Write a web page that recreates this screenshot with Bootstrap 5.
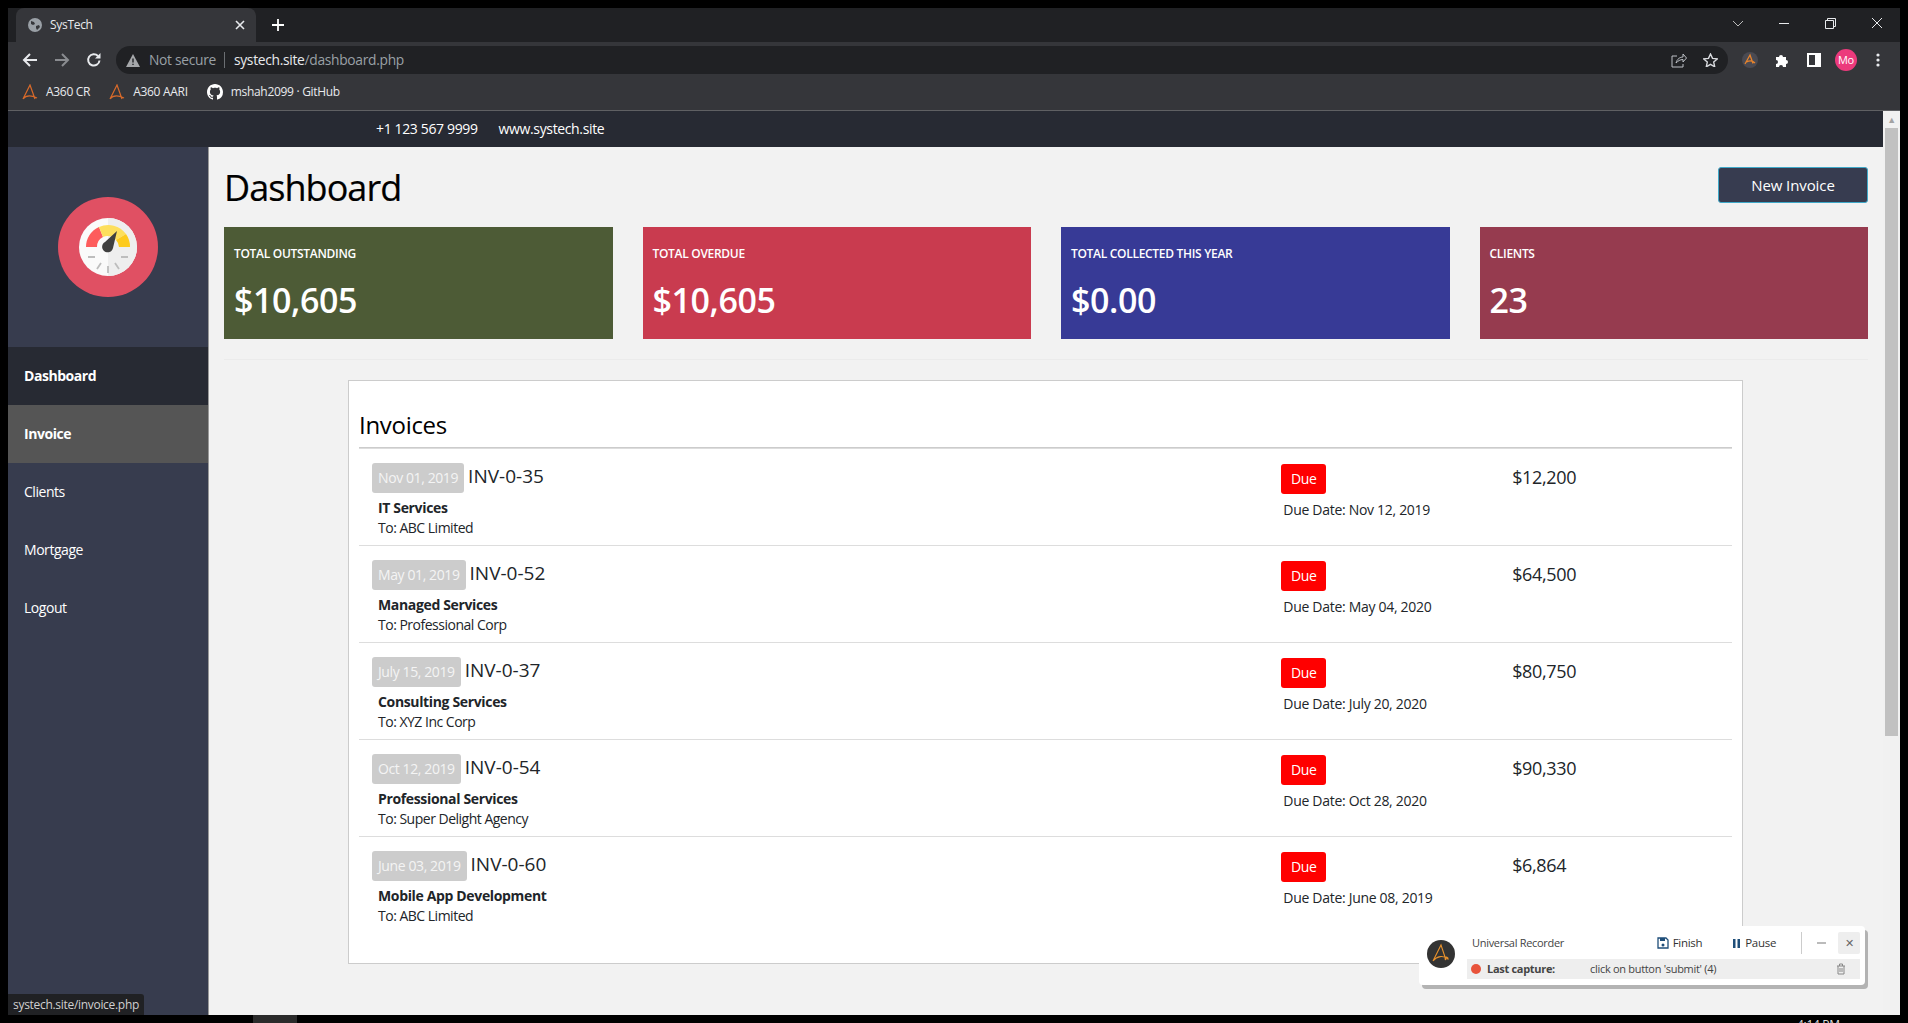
<!DOCTYPE html>
<html lang="en">
<head>
    <meta charset="UTF-8">
    <meta name="viewport" content="width=device-width, initial-scale=1.0">
    <title>SysTech</title>
    <link href="https://cdn.jsdelivr.net/npm/bootstrap@5.3.0/dist/css/bootstrap.min.css" rel="stylesheet">
    <style>
        html, body { height: 100%; }
        body {
            background: #000;
            font-family: "Open Sans", "Noto Sans", sans-serif;
            color: #000;
            overflow: hidden;
            padding: 8px 8px 8px 8px;
            letter-spacing: -0.3px;
        }
        .win { height: 1007px; width: 1892px; position: relative; }

        /* browser frame */
        .tabstrip { height: 34px; background: #202124; padding-left: 8px; color: #e8eaed; }
        .tab-item { width: 240px; height: 34px; background: #35363a; border-radius: 8px 8px 0 0; padding: 0 11px 0 12px; font-size: 12px; }
        .tab-title { margin-left: 8px; }
        .plus-btn { margin-left: 16px; }
        .win-ctrls { gap: 35px; padding: 0 17px 4px 0; }
        .toolbar { height: 40px; background: #35363a; padding: 4px 6px 8px 14px; }
        .nav-icons { gap: 16px; width: 94px; }
        .omnibox { height: 28px; background: #202124; border-radius: 14px; padding: 0 10px 0 10px; font-size: 13.8px; color: #9aa0a6; width: 1612px; flex-shrink: 0; }
        .omni-sep { width: 1px; height: 16px; background: #6b6e72; margin: 0 9px 0 8px; }
        .omni-host { color: #e8eaed; }
        .omni-warn { margin-right: 9px; }
        .ext-icons { margin-left: 6px; }
        .ext-cell { width: 32px; }
        .avatar-mo { width: 22px; height: 22px; border-radius: 50%; background: #ec3a7c; color: #fff; font-size: 11px; line-height: 22px; text-align: center; }
        .bookmarks { height: 29px; background: #35363a; border-bottom: 1px solid #5f6063; padding: 0 0 8px 14px; font-size: 12px; color: #e8eaed; gap: 19px; }
        .bookmarks span { margin-left: 8px; }

        /* page */
        .page-area { height: 904px; }
        .page-left { width: 1875px; }
        .topbar { height: 36px; background: #272a33; color: #fff; font-size: 14px; padding: 0 0 2px 368px; gap: 21px; letter-spacing: -0.36px; }
        .page-body { height: 868px; }
        .side { width: 201px; background: #373c4e; border-right: 1px solid #999; flex-shrink: 0; }
        .side-logo { height: 200px; }
        .side .nav-link { height: 58px; line-height: 58px; padding: 0 0 0 16px; color: #fff; font-size: 14px; letter-spacing: -0.45px; }
        .side .nav-link.on-dash { background: #272a33; font-weight: 700; }
        .side .nav-link.on-inv { background: #555; font-weight: 700; }
        .main-pane { background: #f2f2f2; padding: 0 15px 0 15px; overflow: hidden; }
        .head-row { height: 80px; padding-top: 20px; }
        .page-title { font-size: 36px; font-weight: 400; margin: 0; line-height: 1; padding-top: 3px; letter-spacing: -0.95px; -webkit-text-stroke: 0.2px #000; }
        .btn-new { width: 150px; height: 36px; background: #373c50; color: #fff; border: 1px solid #3fa9c9; border-radius: 3px; font-size: 15px; padding: 0; letter-spacing: -0.1px; }
        .btn-new:hover { background: #373c50; color: #fff; }
        .stat-row { gap: 30px; }
        .stat-box { flex: 1 1 0; height: 112px; border: 0; border-radius: 0; color: #fff; padding: 19px 10px 0; }
        .stat-label { font-size: 12px; font-weight: 600; line-height: 16px; }
        .stat-val { font-size: 34px; font-weight: 600; line-height: 50px; margin-top: 13px; letter-spacing: -0.4px; }
        .bg-olive { background: #4d5b36; }
        .bg-rose { background: #c93b4f; }
        .bg-indigo { background: #373a96; }
        .bg-wine { background: #963b4f; }
        .soft-rule { margin: 20px 0; border: 0; border-top: 1px solid #ebebeb; opacity: 1; }
        .inv-panel { margin: 0 125px 0 124px; height: 584px; background: #fff; border: 1px solid #ccc; border-radius: 0; padding: 0 10px; }
        .inv-title { font-size: 24px; font-weight: 400; line-height: 32px; margin: 0; padding: 28px 0 6px 0; height: 66px; }
        .list-group .inv-row { height: 97px; border: 0; border-top: 1px solid #ddd; padding: 0; background: transparent; }
        .inv-row .row { --bs-gutter-x: 0; }
        .cell-main { padding: 13px 0 0 13px; }
        .date-chip { background: #ccc; color: #f4f4f4; font-size: 14px; font-weight: 400; padding: 0 6px; height: 30px; line-height: 30px; border-radius: 3px; border: 0; letter-spacing: -0.4px; }
        .inv-no { font-size: 19px; margin-left: 4px; letter-spacing: 0; }
        .inv-svc { font-size: 14px; font-weight: 700; margin: 5px 0 0 6px; line-height: 20px; letter-spacing: -0.35px; }
        .inv-to { font-size: 14px; margin: 0 0 0 6px; line-height: 20px; letter-spacing: -0.5px; }
        .cell-due { padding: 15px 0 0 7px; }
        .due-chip { width: 45px; height: 30px; line-height: 30px; text-align: center; background: #f00; color: #fff; font-size: 14px; border-radius: 3px; }
        .due-date { font-size: 14px; margin: 6px 0 0 2px; line-height: 20px; }
        .cell-amt { padding: 15px 0 0 9px; font-size: 18px; font-weight: 500; line-height: 26px; letter-spacing: -0.35px; }

        /* scrollbar */
        .sbar { width: 17px; background: #f1f1f1; padding: 0 2px; color: #a3a3a3; }
        .sbar-arrow { height: 17px; font-size: 9px; line-height: 17px; text-align: center; }
        .sbar-thumb { height: 608px; background: #c1c1c1; }

        /* overlays */
        .link-hint { position: absolute; left: 0; bottom: 0; height: 21px; padding: 0 5px; background: #202124; color: #d0d0d0; font-size: 12px; line-height: 21px; border-radius: 0 3px 0 0; }
        .rec-pop { position: absolute; left: 1411px; top: 918px; width: 446px; height: 59px; background: #fff; border-radius: 4px; box-shadow: 3px 4px 0 #b3b3b3; font-size: 11px; color: #444; padding: 5px 5px 5px 8px; }
        .rec-logo { width: 28px; height: 28px; border-radius: 50%; background: #333; flex-shrink: 0; margin-top: 9px; }
        .rec-body { margin-left: 12px; min-width: 0; }
        .rec-top { height: 28px; padding: 0 0 4px 5px; }
        .rec-name { width: 185px; }
        .rec-act { color: #333; font-size: 11.5px; }
        .rec-act svg { margin-right: 4px; }
        .rec-gap { margin-left: 30px; }
        .rec-sep { width: 1px; height: 22px; background: #ccc; margin: 0 15px 0 25px; }
        .rec-x { width: 22px; height: 22px; background: #eee; border-radius: 2px; line-height: 22px; text-align: center; margin-left: 12px; color: #666; }
        .rec-low { height: 20px; background: #eee; padding: 0 14px 0 4px; }
        .rec-dot { width: 10px; height: 10px; background: #e8533a; border-radius: 50%; margin-right: 6px; }
        .rec-cap { width: 103px; font-weight: 700; }
        .under-strip { position: absolute; left: 245px; top: 1007px; width: 44px; height: 8px; background: #2b2b2b; }
        .under-clock { position: absolute; left: 1789px; top: 1010px; height: 5px; overflow: hidden; color: #ddd; font-size: 12px; line-height: 14px; }
    </style>
</head>
<body>
<div class="win">
    <!-- browser chrome -->
    <div class="tabstrip d-flex align-items-center">
        <div class="tab-item d-flex align-items-center">
            <svg width="14" height="14" viewBox="0 0 14 14"><circle cx="7" cy="7" r="7" fill="#9aa0a6"/><path d="M3 3l3 1 1 2-2 1-2-1zM8 8l3-1 1 2-3 3-1-2z" fill="#35363a"/></svg>
            <span class="tab-title">SysTech</span>
            <svg class="ms-auto" width="10" height="10" viewBox="0 0 10 10"><path d="M1 1l8 8M9 1l-8 8" stroke="#e8eaed" stroke-width="1.6"/></svg>
        </div>
        <svg class="plus-btn" width="12" height="12" viewBox="0 0 12 12"><path d="M6 0v12M0 6h12" stroke="#fff" stroke-width="1.8"/></svg>
        <div class="win-ctrls d-flex align-items-center ms-auto">
            <svg width="12" height="7" viewBox="0 0 12 7"><path d="M1 1l5 5 5-5" fill="none" stroke="#bbb"/></svg>
            <svg width="11" height="11" viewBox="0 0 11 11"><path d="M0 5.500h10" stroke="#e8eaed"/></svg>
            <svg width="11" height="11" viewBox="0 0 11 11"><path d="M2.500 2.500V.5h8v8h-2M.5 2.500h8v8h-8z" fill="none" stroke="#e8eaed"/></svg>
            <svg width="12" height="12" viewBox="0 0 12 12"><path d="M1 1l10 10M11 1L1 11" stroke="#e8eaed"/></svg>
        </div>
    </div>
    <div class="toolbar d-flex align-items-center">
        <div class="nav-icons d-flex align-items-center">
            <svg width="16" height="16" viewBox="0 0 16 16"><path d="M15 8H2M8 2L2 8l6 6" fill="none" stroke="#e8eaed" stroke-width="2"/></svg>
            <svg width="16" height="16" viewBox="0 0 16 16"><path d="M1 8h13M8 2l6 6-6 6" fill="none" stroke="#8a8c90" stroke-width="2"/></svg>
            <svg width="16" height="16" viewBox="0 0 16 16"><path d="M13.500 8.500A5.700 5.700 0 1 1 12 4" fill="none" stroke="#e8eaed" stroke-width="2"/><path d="M14.500 1v5.500H9z" fill="#e8eaed"/></svg>
        </div>
        <div class="omnibox d-flex align-items-center">
            <svg class="omni-warn" width="14" height="13" viewBox="0 0 14 13"><path d="M7 0l7 13H0z" fill="#a5a7aa"/><path d="M7 4.500v4M7 9.700v1.400" stroke="#202124" stroke-width="1.400"/></svg>
            <span>Not secure</span>
            <span class="omni-sep"></span>
            <span><span class="omni-host">systech.site</span>/dashboard.php</span>
            <svg class="ms-auto" width="16" height="15" viewBox="0 0 16 15"><path d="M6 3H1v11h11v-3M5 10c1-4 4-6 7-6V1l3.500 4L12 9V6.500C9 6.500 7 8 5 10z" fill="none" stroke="#bdc1c6"/></svg>
            <svg class="ms-3" width="15" height="14" viewBox="0 0 15 14"><path d="M7.500 1l2 4.400 4.800.5-3.600 3.200 1 4.700-4.200-2.400-4.200 2.400 1-4.700L.7 5.900l4.800-.5z" fill="none" stroke="#dadce0" stroke-width="1.400"/></svg>
        </div>
        <div class="ext-icons d-flex align-items-center">
            <div class="ext-cell d-flex justify-content-center"><svg width="16" height="16" viewBox="0 0 16 16"><circle cx="8" cy="8" r="8" fill="#4a4a52"/><path d="M3 12L8 3l3 8.500M4.500 10C8 8 11 9 13 11" fill="none" stroke="#e8842c" stroke-width="1.300"/></svg></div>
            <div class="ext-cell d-flex justify-content-center"><svg width="15" height="15" viewBox="0 0 15 15"><path d="M1 4h3a2 2 0 1 1 4 0h3v3a2 2 0 1 1 0 4v3H8a2 2 0 1 0-4 0H1v-3a2 2 0 1 0 0-4z" fill="#fff"/></svg></div>
            <div class="ext-cell d-flex justify-content-center"><svg width="14" height="14" viewBox="0 0 14 14"><path d="M0 0h14v14H0zM2 2v10h6V2z" fill="#fff" fill-rule="evenodd"/></svg></div>
            <div class="ext-cell d-flex justify-content-center"><div class="avatar-mo">Mo</div></div>
            <div class="ext-cell d-flex justify-content-center"><svg width="4" height="14" viewBox="0 0 4 14"><circle cx="2" cy="2" r="1.600" fill="#e8eaed"/><circle cx="2" cy="7" r="1.600" fill="#e8eaed"/><circle cx="2" cy="12" r="1.600" fill="#e8eaed"/></svg></div>
        </div>
    </div>
    <div class="bookmarks d-flex align-items-center">
        <div class="d-flex align-items-center"><svg width="16" height="16" viewBox="0 0 16 16"><path d="M1 15L8 1l5 14M1 15c3-4 8-4 14-1" fill="none" stroke="#d96a2a" stroke-width="1.200"/></svg><span>A360 CR</span></div>
        <div class="d-flex align-items-center"><svg width="16" height="16" viewBox="0 0 16 16"><path d="M1 15L8 1l5 14M1 15c3-4 8-4 14-1" fill="none" stroke="#d96a2a" stroke-width="1.200"/></svg><span>A360 AARI</span></div>
        <div class="d-flex align-items-center"><svg width="16" height="16" viewBox="0 0 16 16"><path fill="#fff" d="M8 0C3.580 0 0 3.580 0 8c0 3.540 2.290 6.530 5.470 7.590.4.070.55-.170.55-.380 0-.190-.010-.820-.010-1.490-2.010.370-2.530-.490-2.690-.940-.090-.230-.480-.940-.820-1.130-.280-.150-.680-.520-.010-.530.630-.010 1.080.580 1.230.820.720 1.210 1.870.870 2.330.660.070-.520.280-.870.510-1.070-1.780-.200-3.640-.890-3.640-3.950 0-.870.310-1.590.820-2.150-.080-.200-.360-1.020.080-2.120 0 0 .670-.210 2.200.820.640-.180 1.320-.270 2-.270s1.360.090 2 .270c1.530-1.040 2.200-.820 2.200-.820.440 1.100.160 1.920.080 2.120.510.560.820 1.270.820 2.150 0 3.070-1.870 3.750-3.650 3.950.290.250.540.730.540 1.480 0 1.070-.010 1.930-.010 2.200 0 .210.150.460.550.380A8.010 8.010 0 0 0 16 8c0-4.420-3.580-8-8-8z"/></svg><span>mshah2099 · GitHub</span></div>
    </div>

    <!-- site -->
    <div class="page-area d-flex">
        <div class="page-left">
            <div class="topbar d-flex align-items-center">
                <span>+1 123 567 9999</span>
                <span>www.systech.site</span>
            </div>
            <div class="page-body d-flex">
                <aside class="side">
                    <div class="side-logo d-flex align-items-center justify-content-center">
                        <svg width="100" height="100" viewBox="0 0 100 100">
                            <circle cx="50" cy="50" r="50" fill="#e05063"/>
                            <circle cx="50" cy="50" r="29" fill="#fafafa"/>
                            <path d="M50 21a29 29 0 0 1 0 58z" fill="#eeeeee"/>
                            <path d="M28 50a22 22 0 0 1 13-20l4 10a11 11 0 0 0-6 10z" fill="#fd5c5c"/>
                            <path d="M41 30a22 22 0 0 1 27 7l-10 6a11 11 0 0 0-13-3z" fill="#fddf5c"/>
                            <path d="M68 37a22 22 0 0 1 4 13H61a11 11 0 0 0-3-7z" fill="#fdcb1e"/>
                            <path d="M59 34L55 51a5.500 5.500 0 1 1-8-6z" fill="#404040"/>
                            <path d="M30 60h7M63 60h7M39 72l4-6M61 72l-4-6M50 76v-7" stroke="#bdbdbd" stroke-width="1.800"/>
                        </svg>
                    </div>
                    <nav class="nav flex-column">
                        <a class="nav-link on-dash" href="#">Dashboard</a>
                        <a class="nav-link on-inv" href="#">Invoice</a>
                        <a class="nav-link" href="#">Clients</a>
                        <a class="nav-link" href="#">Mortgage</a>
                        <a class="nav-link" href="#">Logout</a>
                    </nav>
                </aside>
                <main class="main-pane flex-grow-1">
                    <div class="head-row d-flex justify-content-between align-items-start">
                        <h1 class="page-title">Dashboard</h1>
                        <button class="btn btn-new">New Invoice</button>
                    </div>
                    <div class="stat-row d-flex">
                        <div class="card stat-box bg-olive"><div class="stat-label">TOTAL OUTSTANDING</div><div class="stat-val">$10,605</div></div>
                        <div class="card stat-box bg-rose"><div class="stat-label">TOTAL OVERDUE</div><div class="stat-val">$10,605</div></div>
                        <div class="card stat-box bg-indigo"><div class="stat-label">TOTAL COLLECTED THIS YEAR</div><div class="stat-val">$0.00</div></div>
                        <div class="card stat-box bg-wine"><div class="stat-label">CLIENTS</div><div class="stat-val">23</div></div>
                    </div>
                    <hr class="soft-rule">
                    <div class="card inv-panel">
                        <h4 class="inv-title">Invoices</h4>
                        <div class="list-group list-group-flush">
                            <div class="list-group-item inv-row"><div class="row">
                                <div class="col-8 cell-main"><span class="badge date-chip">Nov 01, 2019</span><span class="inv-no">INV-0-35</span><p class="inv-svc">IT Services</p><p class="inv-to">To: ABC Limited</p></div>
                                <div class="col-2 cell-due"><div class="due-chip">Due</div><p class="due-date">Due Date: Nov 12, 2019</p></div>
                                <div class="col-2 cell-amt">$12,200</div>
                            </div></div>
                            <div class="list-group-item inv-row"><div class="row">
                                <div class="col-8 cell-main"><span class="badge date-chip">May 01, 2019</span><span class="inv-no">INV-0-52</span><p class="inv-svc">Managed Services</p><p class="inv-to">To: Professional Corp</p></div>
                                <div class="col-2 cell-due"><div class="due-chip">Due</div><p class="due-date">Due Date: May 04, 2020</p></div>
                                <div class="col-2 cell-amt">$64,500</div>
                            </div></div>
                            <div class="list-group-item inv-row"><div class="row">
                                <div class="col-8 cell-main"><span class="badge date-chip">July 15, 2019</span><span class="inv-no">INV-0-37</span><p class="inv-svc">Consulting Services</p><p class="inv-to">To: XYZ Inc Corp</p></div>
                                <div class="col-2 cell-due"><div class="due-chip">Due</div><p class="due-date">Due Date: July 20, 2020</p></div>
                                <div class="col-2 cell-amt">$80,750</div>
                            </div></div>
                            <div class="list-group-item inv-row"><div class="row">
                                <div class="col-8 cell-main"><span class="badge date-chip">Oct 12, 2019</span><span class="inv-no">INV-0-54</span><p class="inv-svc">Professional Services</p><p class="inv-to">To: Super Delight Agency</p></div>
                                <div class="col-2 cell-due"><div class="due-chip">Due</div><p class="due-date">Due Date: Oct 28, 2020</p></div>
                                <div class="col-2 cell-amt">$90,330</div>
                            </div></div>
                            <div class="list-group-item inv-row"><div class="row">
                                <div class="col-8 cell-main"><span class="badge date-chip">June 03, 2019</span><span class="inv-no">INV-0-60</span><p class="inv-svc">Mobile App Development</p><p class="inv-to">To: ABC Limited</p></div>
                                <div class="col-2 cell-due"><div class="due-chip">Due</div><p class="due-date">Due Date: June 08, 2019</p></div>
                                <div class="col-2 cell-amt">$6,864</div>
                            </div></div>
                        </div>
                    </div>
                </main>
            </div>
        </div>
        <div class="sbar flex-shrink-0">
            <div class="sbar-arrow">&#9650;</div>
            <div class="sbar-thumb"></div>
        </div>
    </div>

    <!-- overlays -->
    <div class="link-hint">systech.site/invoice.php</div>
    <div class="rec-pop d-flex">
        <svg class="rec-logo" viewBox="0 0 28 28"><path d="M6 21L14 5l5 15M6 21c4-5 10-6 15-2a1.500 1.500 0 1 0-2 1" fill="none" stroke="#e8912c" stroke-width="1.100"/></svg>
        <div class="rec-body flex-grow-1">
            <div class="rec-top d-flex align-items-center">
                <span class="rec-name">Universal Recorder</span>
                <span class="rec-act d-flex align-items-center"><svg width="12" height="12" viewBox="0 0 12 12"><path d="M1 1h8l2 2v8H1z" fill="none" stroke="#1f4e79" stroke-width="1.300"/><path d="M3 1h5v3H3z" fill="#1f4e79"/><circle cx="6" cy="8" r="1.500" fill="#1f4e79"/></svg>Finish</span>
                <span class="rec-act rec-gap d-flex align-items-center"><svg width="9" height="11" viewBox="0 0 9 11"><path d="M1 1h2.500v9H1zM5.500 1H8v9H5.500z" fill="#1f4e79"/></svg>Pause</span>
                <span class="rec-sep"></span>
                <svg width="9" height="2" viewBox="0 0 9 2"><path d="M0 1h9" stroke="#777"/></svg>
                <span class="rec-x">&#10005;</span>
            </div>
            <div class="rec-low d-flex align-items-center">
                <span class="rec-dot"></span>
                <span class="rec-cap">Last capture:</span>
                <span>click on button 'submit' (4)</span>
                <svg class="ms-auto" width="10" height="12" viewBox="0 0 10 12"><path d="M1 3h8M3.500 3V1h3v2M2 3v8h6V3M4 5v4M6 5v4" fill="none" stroke="#888"/></svg>
            </div>
        </div>
    </div>
    <div class="under-strip"></div>
    <div class="under-clock">4:14 PM</div>
</div>
<script src="https://cdn.jsdelivr.net/npm/bootstrap@5.3.0/dist/js/bootstrap.bundle.min.js"></script>
</body>
</html>
